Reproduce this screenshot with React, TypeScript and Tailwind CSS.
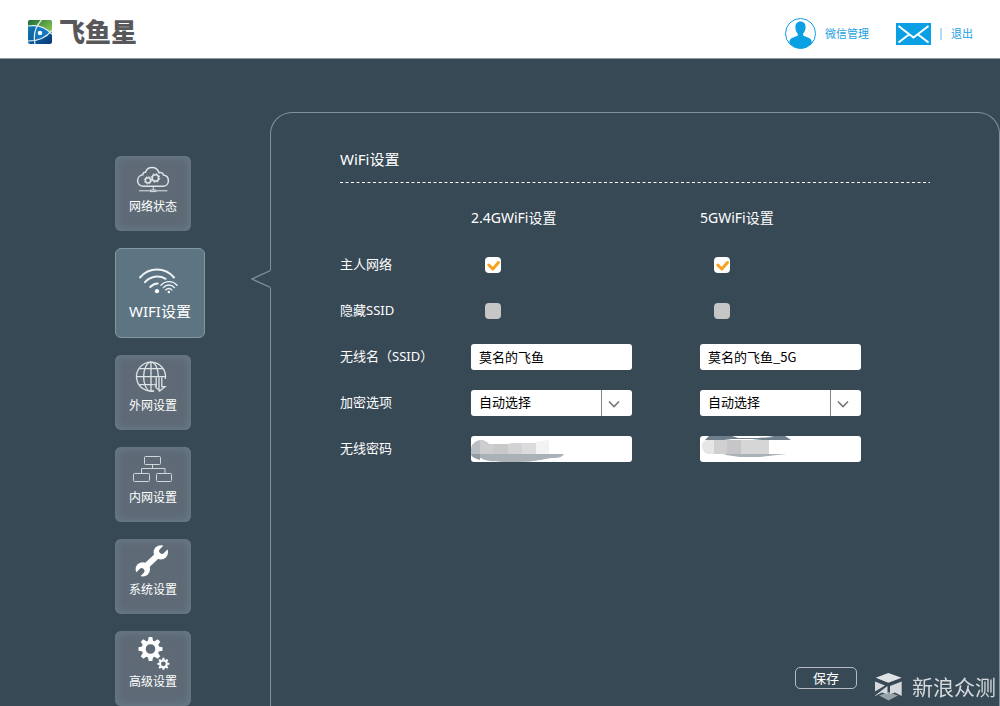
import React, { useState } from "react";

const CloudIcon = () => (
  <svg width="40" height="36" viewBox="0 0 40 36" fill="none" stroke="#dfe4e7" strokeWidth="1.5" aria-hidden="true">
    <path d="M10.5 25.3C7 25.3 4.6 23 4.6 19.7c0-3.2 2.4-5.5 5.2-5.9 0-1.8 1.2-2.8 2.7-2.6 1-3 3.5-4.6 6.5-4.6 3.5 0 6 2 7 5.2 2-.8 4.2.2 4.4 2.2 3.1.5 5 2.8 5 5.7 0 3.3-2.4 5.6-5.6 5.6z" />
    <circle cx="15" cy="19.3" r="2.6" />
    <circle cx="15" cy="19.3" r="3.7" strokeWidth="1" strokeDasharray="1.4 1.5" />
    <circle cx="22.4" cy="17" r="3.2" />
    <circle cx="22.4" cy="17" r="4.4" strokeWidth="1" strokeDasharray="1.7 1.75" />
    <path d="M20.3 25.3v4M6 29.8h11.5M23 29.8h11.4M17.5 29h5.5v1.6h-5.5z" strokeWidth="1" />
  </svg>
);

const WifiIcon = () => (
  <svg width="44" height="30" viewBox="0 0 44 30" fill="none" stroke="#eef2f4" strokeLinecap="round" aria-hidden="true">
    <path d="M2 10.5a22 22 0 0 1 34 0" strokeWidth="2" />
    <path d="M7 15.2a16.5 16.5 0 0 1 20.6-3.4" strokeWidth="2" />
    <path d="M12.2 20a10.5 10.5 0 0 1 7.6-3.6" strokeWidth="2" />
    <path d="M23 18.3a10.5 10.5 0 0 1 16 0" strokeWidth="1.4" />
    <path d="M25.4 20.6a7.2 7.2 0 0 1 11 0" strokeWidth="1.4" />
    <path d="M27.8 22.9a4 4 0 0 1 6 0" strokeWidth="1.4" />
    <circle cx="19" cy="24.2" r="2.1" fill="#fff" stroke="none" />
    <circle cx="30.8" cy="25" r="1.2" fill="#fff" stroke="none" />
  </svg>
);

const GlobeIcon = () => (
  <svg width="40" height="36" viewBox="0 0 40 36" fill="none" stroke="#dfe4e7" strokeWidth="1.3" aria-hidden="true">
    <path d="M21 30.8A14.5 14.5 0 1 1 32.3 19" />
    <path d="M18 2.2v29M3.5 16.7h28.7M6.3 8.7h23.4M6.3 24.7h14.4" />
    <path d="M21 30.6c-1 .5-2 .6-3 .6-4 0-7.4-6.5-7.4-14.5S14 2.2 18 2.2s7.4 6.5 7.4 14.5" />
    <path d="M23.2 17.2v8.5l-2-1.6M26 17.2v13.2M26 30.4l-4-4M28.8 17.2v9.4h3.2l-6 4.8" />
  </svg>
);

const LanIcon = () => (
  <svg width="40" height="36" viewBox="0 0 40 36" fill="none" stroke="#cfd6da" strokeWidth="1" aria-hidden="true">
    <rect x="11.5" y="4.5" width="16" height="8" rx="1" />
    <rect x="0.5" y="21.5" width="16" height="8" rx="1" />
    <rect x="23.5" y="21.5" width="15" height="8" rx="1" />
    <path d="M19.5 12.5v4M8.5 21.5v-5h23.5v5" />
  </svg>
);

const WrenchIcon = () => (
  <svg width="40" height="36" viewBox="0 0 40 36" aria-hidden="true">
    <mask id="jaws">
      <rect width="40" height="36" fill="#fff" />
      <path d="M1 34.5L8.6 26.9M36.5-.5L29 7" stroke="#000" strokeWidth="5.6" strokeLinecap="round" />
    </mask>
    <g mask="url(#jaws)" fill="#fff">
      <circle cx="9.8" cy="25.4" r="7.2" />
      <circle cx="27.8" cy="8.4" r="7.2" />
      <path d="M11 24L26.5 9.6" stroke="#fff" strokeWidth="6" />
    </g>
  </svg>
);

type GearProps = { cx: number; cy: number; size: number };

const Gear = ({ cx, cy, size }: GearProps) => (
  <g transform={`translate(${cx} ${cy}) scale(${size})`}>
    <circle r="6.8" fill="none" stroke="#fff" strokeWidth="4" />
    {[0, 45, 90, 135, 180, 225, 270, 315].map((a) => (
      <path key={a} d="M-2.6-8L-1.8-12H1.8L2.6-8z" fill="#fff" transform={`rotate(${a})`} />
    ))}
  </g>
);

const GearsIcon = () => (
  <svg width="40" height="36" viewBox="0 0 40 36" aria-hidden="true">
    <Gear cx={17.5} cy={13} size={1} />
    <Gear cx={30.4} cy={27.8} size={0.5} />
  </svg>
);

const menu = [
  { label: "网络状态", icon: <CloudIcon /> },
  { label: "WIFI设置", icon: <WifiIcon />, active: true },
  { label: "外网设置", icon: <GlobeIcon /> },
  { label: "内网设置", icon: <LanIcon /> },
  { label: "系统设置", icon: <WrenchIcon /> },
  { label: "高级设置", icon: <GearsIcon /> },
];

const Logo = () => (
  <svg width="24" height="24" viewBox="0 0 24 24" aria-hidden="true">
    <defs>
      <linearGradient id="green" x1="0" y1="0" x2="1" y2="0.6">
        <stop offset="0" stopColor="#1d6b3a" />
        <stop offset="1" stopColor="#7fc04a" />
      </linearGradient>
      <linearGradient id="blue" x1="0" y1="0" x2="1" y2="1">
        <stop offset="0" stopColor="#1583c4" />
        <stop offset="1" stopColor="#063a78" />
      </linearGradient>
      <clipPath id="tile">
        <rect width="24" height="24" rx="2.5" />
      </clipPath>
    </defs>
    <g clipPath="url(#tile)">
      <rect width="24" height="24" fill="url(#blue)" />
      <path d="M0 0h24v13C17 6.5 9 4.5 0 6z" fill="url(#green)" />
      <path d="M9 6.500c5 .5 10 3 13.500 6.500-4 4-9 6-15.500 7C6 14.500 7 10 9 6.500z" fill="#1478c2" />
      <path d="M0 6c9-1.500 18 1 24 8.500M13.500 0C7 7 5 15 7 24M24 10c-5 7-13 11-24 11" fill="none" stroke="#e8f3f5" strokeWidth="1.2" />
      <rect x="10" y="11" width="4" height="4" rx="1.2" fill="#fff" />
    </g>
  </svg>
);

const Header = () => (
  <header className="flex h-[59px] items-center justify-between border-b border-[#8d979f] bg-white pt-[5px] pr-[27px] pl-7">
    <a href="#" className="flex items-center gap-[7px] text-[26px] leading-7 font-black text-[#58585b]">
      <Logo />
      飞鱼星
    </a>
    <div className="flex items-center pt-1 text-[11px] leading-4 text-[#1c9fdf]">
      <a href="#" className="flex items-center gap-[9px]">
        <svg width="31" height="31" viewBox="0 0 31 31" aria-hidden="true">
          <circle cx="15.5" cy="15.5" r="15" fill="#fff" stroke="#0b9fe3" strokeWidth="1" />
          <path d="M15.5 3.5c3.4 0 5.1 2.300 5.100 5.600 0 2.800-1 5.200-2.400 6.500v1.800c1.500 1.300 6.500 1.700 8 4.500.5 1 .6 2 .6 3A15 15 0 0 1 15.500 30.500 15 15 0 0 1 4.300 25c0-1 .1-2 .6-3 1.500-2.800 6.400-3.200 7.900-4.500v-1.800c-1.400-1.300-2.400-3.700-2.400-6.500 0-3.400 1.700-5.700 5.100-5.700z" fill="#0b9fe3" />
        </svg>
        微信管理
      </a>
      <a href="#" aria-label="消息" className="ml-[27px]">
        <svg width="35" height="22" viewBox="0 0 35 22" aria-hidden="true">
          <rect width="35" height="22" fill="#0b9fe3" />
          <path d="M2.500 3L17.500 14.500 32.500 3M2.500 19.500L13 11.500M32.500 19.500L22 11.500" fill="none" stroke="#fff" strokeWidth="2" />
        </svg>
      </a>
      <span className="ml-[9px] h-3 w-0.5 bg-[#b3dcf3]" />
      <a href="#" className="ml-[9px]">
        退出
      </a>
    </div>
  </header>
);

const CheckBox = ({ label, id, defaultChecked }: { label: string; id: string; defaultChecked?: boolean }) => {
  const [checked, setChecked] = useState(!!defaultChecked);
  return (
    <div className="flex items-center pl-3.5">
      <div className="relative size-4">
        <input
          id={id}
          type="checkbox"
          aria-label={label}
          checked={checked}
          onChange={(e) => setChecked(e.target.checked)}
          className="block size-4 appearance-none rounded bg-[#c6c6c6] checked:bg-white"
        />
        {checked && (
          <svg className="pointer-events-none absolute inset-0" width="16" height="16" viewBox="0 0 16 16" aria-hidden="true">
            <path d="M3.800 8l4 4 5.700-6.500" fill="none" stroke="#f9a11b" strokeWidth="3" strokeLinecap="round" strokeLinejoin="round" />
          </svg>
        )}
      </div>
    </div>
  );
};

const field =
  "block h-[26px] w-[161px] appearance-none rounded-[3px] bg-white px-2 pb-0.5 font-['Liberation_Sans_Narrow','Noto_Sans_CJK_SC',sans-serif] text-[13px] text-black";

const SelectBox = ({ label, id }: { label: string; id: string }) => (
  <div className="relative w-[161px]">
    <select id={id} aria-label={label} className={field}>
      <option>自动选择</option>
      <option>不加密</option>
    </select>
    <div className="pointer-events-none absolute inset-y-0 right-0 flex w-[31px] items-center border-l border-[#7d868c] pl-1.5">
      <svg width="12" height="8" viewBox="0 0 12 8" className="mt-0.5" fill="none" stroke="#777" strokeWidth="1.6" aria-hidden="true">
        <path d="M1 1.500l5 5 5-5" />
      </svg>
    </div>
  </div>
);

// scribbled-out key on the 2.4G side
const MaskA = () => (
  <svg width="93" height="26" viewBox="0 0 93 26" className="pointer-events-none absolute inset-0" aria-hidden="true">
    <path d="M0 13C0 8 5 4 10 4c3 0 6 2 8 4v10H0z" fill="#b9bfc5" />
    <path d="M9 4c4 0 6 2 9 4h5v10H9z" fill="#cdcdcf" />
    <path d="M23 8h14v10H23z" fill="#c8c8ca" />
    <path d="M37 8l4-1h10v11H37z" fill="#d3d3d5" />
    <path d="M51 7h14v11H51z" fill="#dcdcde" />
    <path d="M65 6l13-2v14H65z" fill="#f3f3f4" />
    <path d="M0 18h93c-2 3-5 4-10 4-9 0-15 4-38 4-18 0-30 0-35-4H4c-2-1-4-2-4-4z" fill="#aab1b7" />
    <path d="M0 18h9v6c-4-1-8-3-9-6z" fill="#929ca4" />
  </svg>
);

// same for the 5G side
const MaskB = () => (
  <svg width="93" height="26" viewBox="0 0 93 26" className="pointer-events-none absolute inset-0" aria-hidden="true">
    <path d="M5 4l4-4h76l6 4H62l-10-1H32l-8 1z" fill="#6e7f8b" />
    <path d="M32 0h36l6 1-17 1H38z" fill="#fff" />
    <path d="M2 10c0-3 1-5 4-6h8v14H8c-4-1-6-4-6-8z" fill="#e6e6e7" />
    <path d="M14 4h13v14H14z" fill="#d0d0d1" />
    <path d="M27 4h14v14H27z" fill="#c6c6c8" />
    <path d="M41 4h28v14H41z" fill="#d6d6d7" />
    <path d="M24 18h63l-10 1-17 2H40l-14-2z" fill="#aab1b7" />
  </svg>
);

const Row = ({ label, htmlFor, children }: { label: string; htmlFor: string; children: React.ReactNode }) => (
  <div className="grid h-[26px] grid-cols-[131px_229px_1fr] items-center">
    <label htmlFor={htmlFor}>{label}</label>
    {children}
  </div>
);

export default function App() {
  const [ssid, setSsid] = useState("莫名的飞鱼");
  const [ssid5, setSsid5] = useState("莫名的飞鱼_5G");

  return (
    <div className="flex min-h-screen flex-col bg-[#384956] font-['Noto_Sans','Noto_Sans_CJK_SC',sans-serif] text-white">
      <Header />

      <div className="flex flex-1">
        <nav className="flex w-[270px] shrink-0 flex-col gap-[17px] pt-[97px] pl-[115px]">
          {menu.map((item) =>
            item.active ? (
              <button
                key={item.label}
                aria-current="page"
                className="flex h-[90px] w-[90px] flex-col items-center gap-1 rounded-md border border-[#8398a3] bg-[#5d7583] pt-[18px] text-[15px] leading-5"
              >
                {item.icon}
                {item.label}
              </button>
            ) : (
              <button
                key={item.label}
                className="flex h-[75px] w-[76px] flex-col items-center gap-0.5 rounded-md bg-[#5e6b76] pt-[5px] text-xs leading-4 shadow-[inset_0_0_10px_#6c7f8c]"
              >
                {item.icon}
                {item.label}
              </button>
            )
          )}
        </nav>

        <main className="relative mt-[53px] flex flex-1 flex-col rounded-t-[22px] border border-b-0 border-[#84919a] pr-[69px] pl-[69px] pt-9">
          {/* arrow towards the active menu item */}
          <svg className="absolute top-[156px] -left-5" width="21" height="20" viewBox="0 0 21 20" aria-hidden="true">
            <path d="M21 1H19.500L1 10l18.500 9H21z" fill="#384956" />
            <path d="M19.500 1.500L1 10l18.500 8.500" fill="none" stroke="#84919a" strokeWidth="1.3" />
          </svg>

          <h1 className="text-[15px] leading-5">WiFi设置</h1>
          <svg className="mt-[13px] h-px w-full" aria-hidden="true">
            <line x1="0" y1="0.5" x2="100%" y2="0.5" stroke="#fff" strokeDasharray="3 2.5" />
          </svg>

          <form className="flex flex-1 flex-col pt-[25px] text-[13px]" onSubmit={(e) => e.preventDefault()}>
            <div className="grid grid-cols-[131px_229px_1fr] text-sm leading-5">
              <h2 className="col-start-2">2.4GWiFi设置</h2>
              <h2>5GWiFi设置</h2>
            </div>

            <div className="mt-6 flex flex-col gap-5">
              <Row label="主人网络" htmlFor="host">
                <CheckBox id="host" label="2.4G主人网络" defaultChecked />
                <CheckBox id="host5" label="5G主人网络" defaultChecked />
              </Row>
              <Row label="隐藏SSID" htmlFor="hide">
                <CheckBox id="hide" label="2.4G隐藏SSID" />
                <CheckBox id="hide5" label="5G隐藏SSID" />
              </Row>
              <Row label="无线名（SSID）" htmlFor="ssid">
                <input id="ssid" className={field} value={ssid} onChange={(e) => setSsid(e.target.value)} />
                <input aria-label="5G无线名" className={field} value={ssid5} onChange={(e) => setSsid5(e.target.value)} />
              </Row>
              <Row label="加密选项" htmlFor="enc">
                <SelectBox id="enc" label="2.4G加密选项" />
                <SelectBox id="enc5" label="5G加密选项" />
              </Row>
              <Row label="无线密码" htmlFor="pwd">
                <div className="relative w-[161px]">
                  <input id="pwd" type="password" className={field} />
                  <MaskA />
                </div>
                <div className="relative w-[161px]">
                  <input aria-label="5G无线密码" type="password" className={field} />
                  <MaskB />
                </div>
              </Row>
            </div>

            <button
              type="submit"
              className="mt-auto mr-[73px] mb-[17px] h-[22px] w-[62px] self-end rounded-[5px] border border-[#b4bcc2] leading-5"
            >
              保存
            </button>
          </form>
        </main>
      </div>

      <div className="fixed right-1 bottom-1 flex items-center gap-2.5 text-[21px] leading-7 text-[#d5d9dc]">
        <svg width="28" height="30" viewBox="0 0 28 30" aria-hidden="true">
          <path d="M5 23.500l9.500-3.500L24 23.500l-9.500 5z" fill="#97a1a8" />
          <path d="M1.700 5.800L14.300 1l13.400 4.800-13.400 5z" fill="#e0e3e5" />
          <path d="M1 9.500l10 4L1 19.500z" fill="#d5d9dc" />
          <path d="M1 23.500l12.500-9.500v8L8 20.500 1 24z" fill="#d5d9dc" />
          <path d="M16 14l11.700-4.500V24L21 20.500 16 22z" fill="#d5d9dc" />
        </svg>
        新浪众测
      </div>
    </div>
  );
}
